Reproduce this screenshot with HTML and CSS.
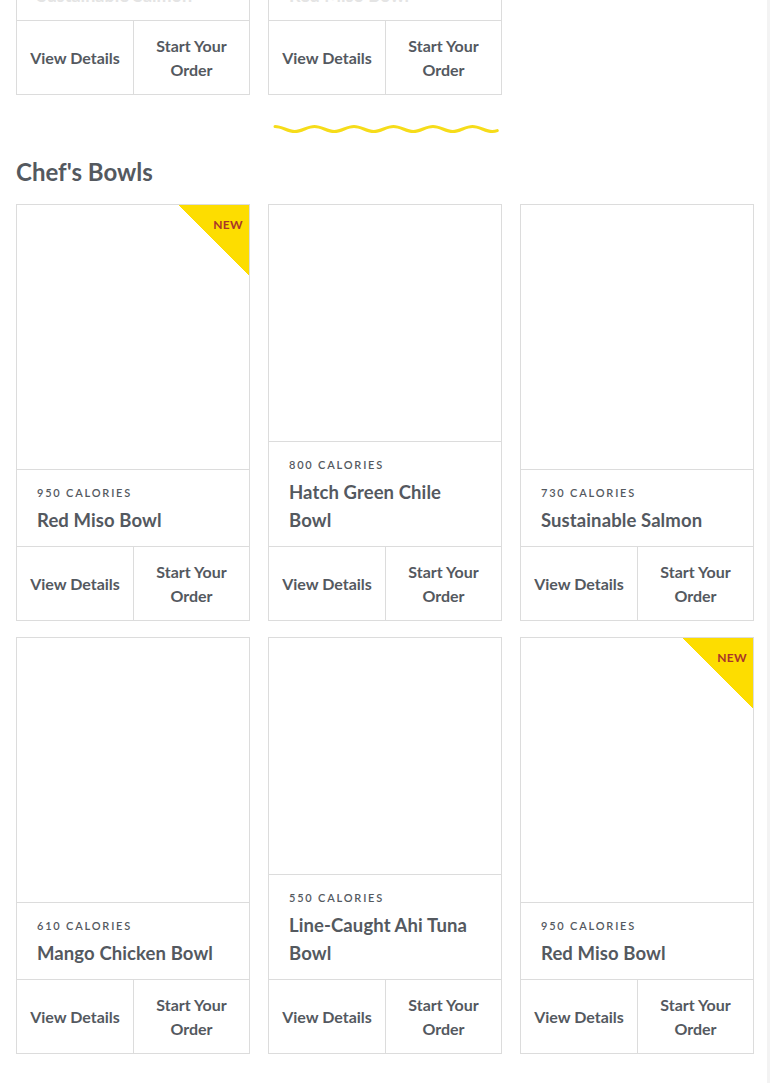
FILE: index.html
```html
<!DOCTYPE html>
<html>
<head>
<meta charset="utf-8">
<link rel="stylesheet" href="styles.css">
</head>
<body>
<div class="page">
  <div class="grid grid-top">
    <div class="card">
      <div class="cut"><span>Sustainable Salmon</span></div>
      <div class="actions">
        <div class="btn">View Details</div>
        <div class="btn">Start Your<br>Order</div>
      </div>
    </div>
    <div class="card">
      <div class="cut"><span>Red Miso Bowl</span></div>
      <div class="actions">
        <div class="btn">View Details</div>
        <div class="btn">Start Your<br>Order</div>
      </div>
    </div>
  </div>

  <div class="divider">
    <svg width="226" height="12" viewBox="0 0 226 12">
      <path d="M2 3.5 c7.2 0 12.55 5 19.75 5 c7.2 0 12.55 -5 19.75 -5 c7.2 0 12.55 5 19.75 5 c7.2 0 12.55 -5 19.75 -5 c7.2 0 12.55 5 19.75 5 c7.2 0 12.55 -5 19.75 -5 c7.2 0 12.55 5 19.75 5 c7.2 0 12.55 -5 19.75 -5 c7.2 0 12.55 5 19.75 5 c7.2 0 12.55 -5 19.75 -5 c7.2 0 12.55 5 19.75 5 c2 0 3.5 -0.3 5 -0.9" fill="none" stroke="#f6dc1a" stroke-width="3" stroke-linecap="round"/>
    </svg>
  </div>

  <h2 class="section-title">Chef's Bowls</h2>

  <div class="grid">
    <div class="card">
      <div class="photo"><div class="badge"><span>NEW</span></div></div>
      <div class="info"><div class="cal">950 CALORIES</div><div class="name">Red Miso Bowl</div></div>
      <div class="actions"><div class="btn">View Details</div><div class="btn">Start Your<br>Order</div></div>
    </div>
    <div class="card">
      <div class="photo"></div>
      <div class="info"><div class="cal">800 CALORIES</div><div class="name">Hatch Green Chile Bowl</div></div>
      <div class="actions"><div class="btn">View Details</div><div class="btn">Start Your<br>Order</div></div>
    </div>
    <div class="card">
      <div class="photo"></div>
      <div class="info"><div class="cal">730 CALORIES</div><div class="name">Sustainable Salmon</div></div>
      <div class="actions"><div class="btn">View Details</div><div class="btn">Start Your<br>Order</div></div>
    </div>
    <div class="card">
      <div class="photo"></div>
      <div class="info"><div class="cal">610 CALORIES</div><div class="name">Mango Chicken Bowl</div></div>
      <div class="actions"><div class="btn">View Details</div><div class="btn">Start Your<br>Order</div></div>
    </div>
    <div class="card">
      <div class="photo"></div>
      <div class="info"><div class="cal">550 CALORIES</div><div class="name">Line-Caught Ahi Tuna Bowl</div></div>
      <div class="actions"><div class="btn">View Details</div><div class="btn">Start Your<br>Order</div></div>
    </div>
    <div class="card">
      <div class="photo"><div class="badge"><span>NEW</span></div></div>
      <div class="info"><div class="cal">950 CALORIES</div><div class="name">Red Miso Bowl</div></div>
      <div class="actions"><div class="btn">View Details</div><div class="btn">Start Your<br>Order</div></div>
    </div>
  </div>
</div>
</body>
</html>
```

FILE: styles.css
```css
html {
  background: #f3f3f3;
}
body {
  margin: 0;
  width: 767px;
  min-height: 1083px;
  background: #fff;
  font-family: Lato, "Liberation Sans", sans-serif;
  color: #54595f;
}
.page {
  padding: 0 16px;
  width: 738px;
}
.grid {
  display: grid;
  grid-template-columns: repeat(3, 234px);
  column-gap: 18px;
  row-gap: 16px;
}
.card {
  border: 1px solid #dcdcdc;
  display: flex;
  flex-direction: column;
  background: #fff;
}
.grid-top .card {
  border-top: none;
}
.cut {
  height: 20px;
  overflow: hidden;
}
.cut span {
  display: block;
  padding-left: 20px;
  margin-top: -19px;
  font-size: 18px;
  line-height: 28px;
  font-weight: 700;
  color: #e4e4e4;
}
.photo {
  flex: 1;
  min-height: 236px;
  position: relative;
  border-bottom: 1px solid #dcdcdc;
}
.badge {
  position: absolute;
  top: 0;
  right: 0;
  width: 70px;
  height: 70px;
  background: linear-gradient(to bottom left, #fddd00 50%, transparent 50.5%);
}
.badge span {
  position: absolute;
  top: 12px;
  right: 6px;
  font-size: 12px;
  font-weight: 700;
  color: #a9362a;
  letter-spacing: 0.3px;
}
.info {
  padding: 16px 20px 12px 20px;
}
.cal {
  font-size: 11px;
  line-height: 14px;
  letter-spacing: 1.8px;
  font-weight: 600;
  color: #54595f;
}
.name {
  margin-top: 6px;
  font-size: 18.5px;
  line-height: 28px;
  font-weight: 700;
  color: #54595f;
  letter-spacing: 0.1px;
}
.actions {
  display: grid;
  grid-template-columns: 1fr 1fr;
  border-top: 1px solid #dcdcdc;
  height: 73px;
}
.btn {
  display: flex;
  align-items: center;
  justify-content: center;
  text-align: center;
  font-size: 16px;
  line-height: 24px;
  font-weight: 700;
  color: #54595f;
}
.btn + .btn {
  border-left: 1px solid #dcdcdc;
}
.divider {
  margin-top: 28px;
  height: 12px;
  display: flex;
  justify-content: center;
}
.divider svg {
  display: block;
  margin-left: 1px;
}
.section-title {
  margin: 21px 0 16px 0;
  font-size: 24px;
  line-height: 32px;
  font-weight: 700;
  color: #54595f;
}
```
